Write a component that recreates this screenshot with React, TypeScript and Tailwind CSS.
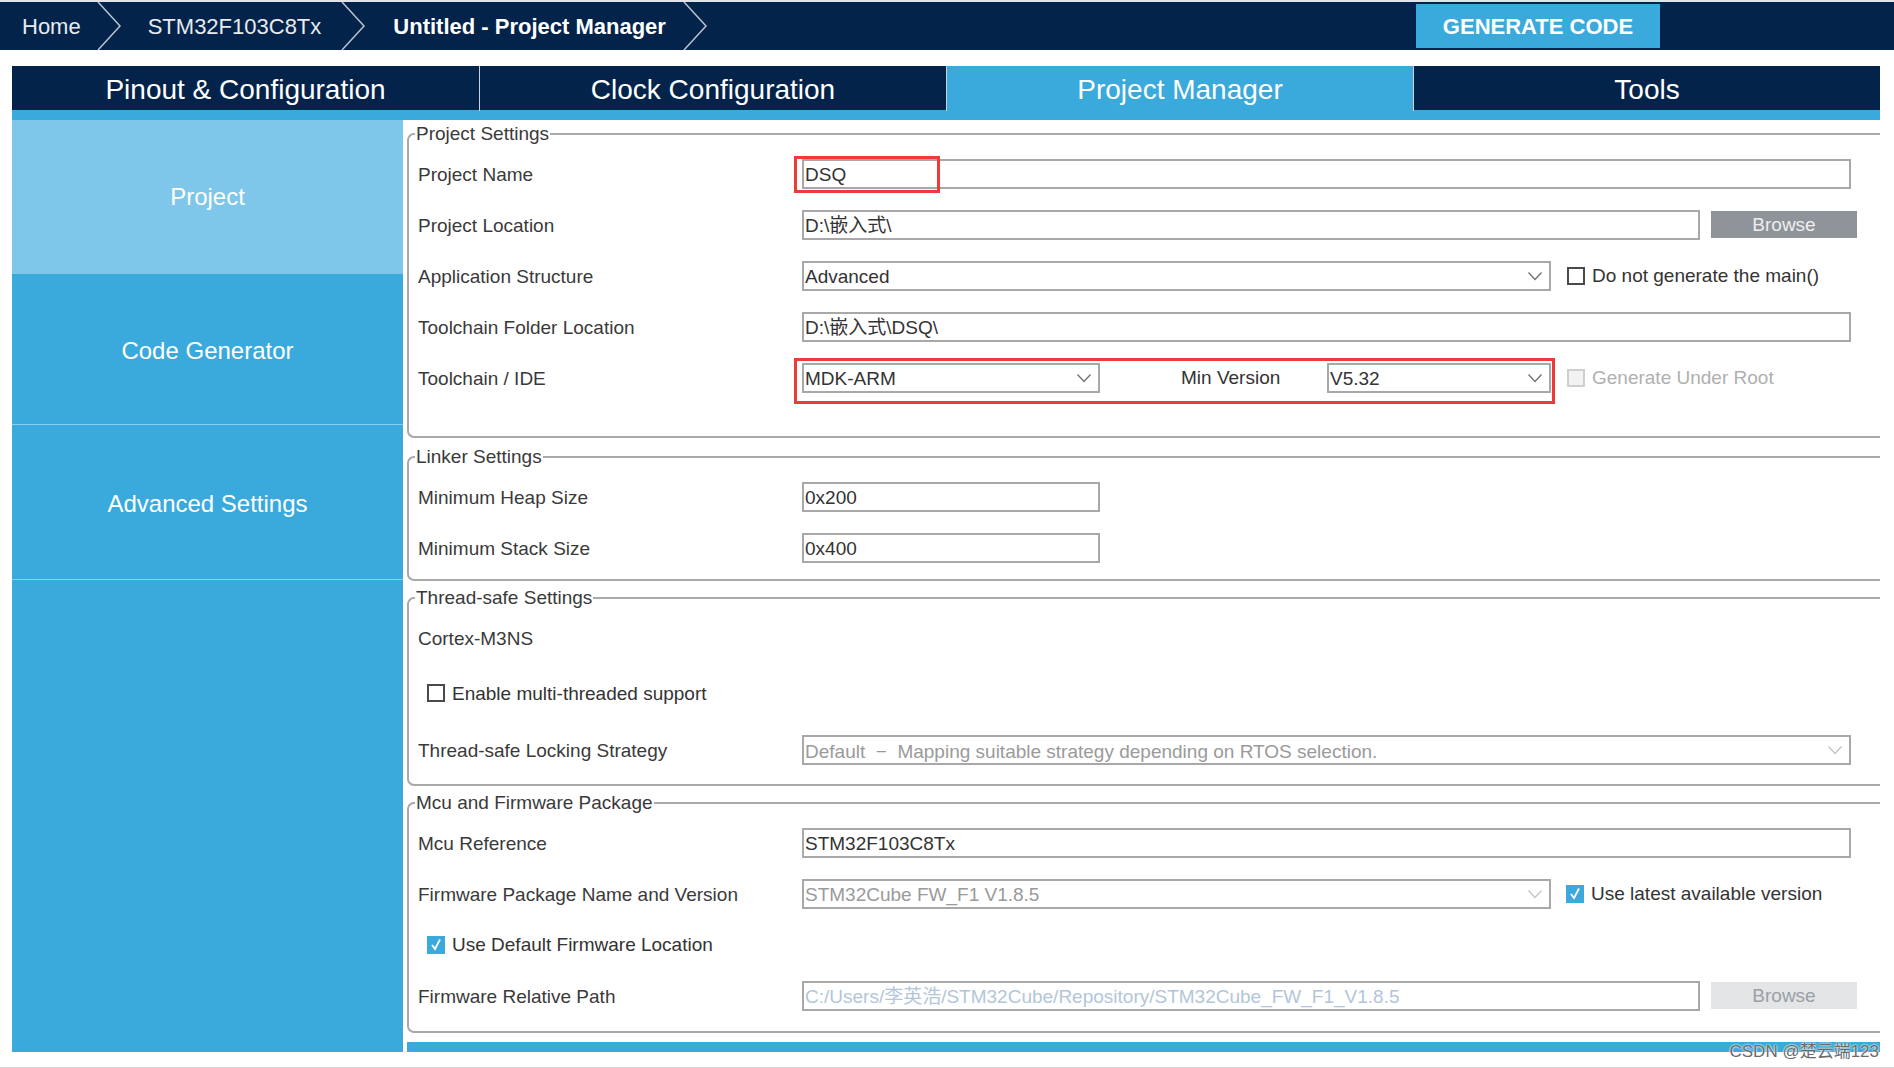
import React from "react";

const FONT = "font-['Liberation_Sans','Noto_Sans_CJK_SC',sans-serif]";

function Caret({ faint = false }: { faint?: boolean }) {
  return (
    <svg width="16" height="10" viewBox="0 0 16 10" className="shrink-0">
      <polyline
        points="1.5,1.5 8,8.5 14.5,1.5"
        fill="none"
        stroke={faint ? "#c4c4c4" : "#707070"}
        strokeWidth="1.3"
      />
    </svg>
  );
}

function Crumb() {
  return (
    <svg width="26" height="48" viewBox="0 0 26 48" className="shrink-0">
      <polyline points="2,0 24,24 2,48" fill="none" stroke="#b9c2cf" strokeWidth="1.5" />
    </svg>
  );
}

type Tone = "normal" | "muted" | "path";

function Field({
  width,
  value,
  tone = "normal",
  select = false,
  children,
}: {
  width: string;
  value: string;
  tone?: Tone;
  select?: boolean;
  children?: React.ReactNode;
}) {
  const color =
    tone === "muted" ? "text-[#9a9a9a]" : tone === "path" ? "text-[#b3c6d9]" : "text-[#333333]";
  return (
    <div
      className={`relative flex h-[30px] shrink-0 items-center justify-between border-2 border-[#a8a8a8] bg-white pl-[1px] pr-[6px] text-[19px] ${width} ${color}`}
    >
      <span className="whitespace-pre pt-[2px] leading-none">{value}</span>
      {select && <Caret faint={tone !== "normal"} />}
      {children}
    </div>
  );
}

function Check({ state }: { state: "off" | "on" | "disabled" }) {
  if (state === "on") {
    return (
      <span className="flex h-[18px] w-[18px] shrink-0 items-center justify-center bg-[#3aa9dc]">
        <svg width="12" height="13" viewBox="0 0 12 13">
          <polyline points="2,7 5,11 10,1.5" fill="none" stroke="white" strokeWidth="1.8" />
        </svg>
      </span>
    );
  }
  if (state === "disabled") {
    return <span className="h-[18px] w-[18px] shrink-0 border-2 border-[#cfcfcf] bg-[#f2f2f2]" />;
  }
  return <span className="h-[18px] w-[18px] shrink-0 border-2 border-[#4a4a4a] bg-white" />;
}

function Browse({ disabled = false }: { disabled?: boolean }) {
  return (
    <div
      className={`ml-[11px] flex h-[27px] w-[146px] shrink-0 items-center justify-center pt-[2px] text-[19px] ${
        disabled ? "bg-[#e3e5e7] text-[#9aa0a5]" : "bg-[#8e949a] text-[#eeeeee]"
      }`}
    >
      Browse
    </div>
  );
}

function Row({
  label,
  h = "h-[51px]",
  children,
}: {
  label?: string;
  h?: string;
  children?: React.ReactNode;
}) {
  return (
    <div className={`flex items-center ${h}`}>
      <div className="w-[384px] shrink-0 whitespace-nowrap pt-[3px] text-[19px] text-[#3a3a3a]">
        {label}
      </div>
      {children}
    </div>
  );
}

function Group({
  title,
  className,
  children,
}: {
  title: string;
  className: string;
  children: React.ReactNode;
}) {
  return (
    <fieldset
      className={`rounded-l-[7px] border-t-2 border-b-2 border-l-2 border-[#a9a9a9] pl-[9px] ${className}`}
    >
      <legend className="-ml-[3px] px-[1px] text-[19px] leading-[22px] text-[#3a3a3a]">{title}</legend>
      {children}
    </fieldset>
  );
}

function Option({ state, label }: { state: "off" | "on" | "disabled"; label: string }) {
  return (
    <div className="flex items-center gap-[7px]">
      <Check state={state} />
      <span
        className={`whitespace-nowrap pt-[2px] text-[19px] ${
          state === "disabled" ? "text-[#b0b0b0]" : "text-[#333333]"
        }`}
      >
        {label}
      </span>
    </div>
  );
}

const tabs = ["Pinout & Configuration", "Clock Configuration", "Project Manager", "Tools"];
const sideItems = [
  { label: "Project", cls: "h-[154px] bg-[#7ec6ea]" },
  { label: "Code Generator", cls: "h-[151px] pt-[4px] border-b border-[#8ccdee]" },
  { label: "Advanced Settings", cls: "h-[155px] pt-[4px] border-b border-[#8ccdee]" },
];

export default function App() {
  return (
    <div className={`relative h-[1068px] w-[1894px] overflow-hidden bg-white ${FONT}`}>
      {/* breadcrumb bar */}
      <div className="flex h-[50px] items-center border-t-2 border-[#dfe4ea] bg-[#03234b] pl-[22px] text-[22px]">
        <span className="text-[#e8ebef]">Home</span>
        <span className="ml-[15px] flex">
          <Crumb />
        </span>
        <span className="ml-[26px] text-[#e8ebef]">STM32F103C8Tx</span>
        <span className="ml-[19px] flex">
          <Crumb />
        </span>
        <span className="ml-[27px] font-bold text-white">Untitled - Project Manager</span>
        <span className="ml-[16px] flex">
          <Crumb />
        </span>
        <div className="ml-auto mr-[234px] flex h-[44px] w-[244px] items-center justify-center bg-[#3aa9dc] text-[22px] font-bold text-white">
          GENERATE CODE
        </div>
      </div>

      {/* main tabs */}
      <div className="ml-[12px] mr-[14px] mt-[16px]">
        <div className="grid h-[44px] grid-cols-4 bg-[#03234b]">
          {tabs.map((t, i) => (
            <div
              key={t}
              className={`flex items-center justify-center pt-[3px] text-[28px] text-white ${
                i > 0 ? "border-l border-[#c9d2dd]" : ""
              } ${t === "Project Manager" ? "bg-[#3aa9dc]" : ""}`}
            >
              {t}
            </div>
          ))}
        </div>
        <div className="h-[10px] bg-[#3aa9dc]" />

        <div className="flex h-[932px]">
          {/* sidebar */}
          <div className="flex w-[391px] shrink-0 flex-col bg-[#3aa9dc]">
            {sideItems.map((s) => (
              <div
                key={s.label}
                className={`flex items-center justify-center text-[24px] text-white ${s.cls}`}
              >
                {s.label}
              </div>
            ))}
          </div>

          {/* settings */}
          <div className="flex min-w-0 flex-1 flex-col overflow-hidden pl-[4px]">
            <Group title="Project Settings" className="mt-[3px] pb-[33px]">
              <div className="pt-[3px]">
                <Row label="Project Name">
                  <Field width="w-[1049px]" value="DSQ">
                    <div className="absolute -left-[10px] -top-[5px] h-[37px] w-[146px] border-[3px] border-[#ef3a3a]" />
                  </Field>
                </Row>
                <Row label="Project Location">
                  <Field width="w-[898px]" value="D:\嵌入式\" />
                  <Browse />
                </Row>
                <Row label="Application Structure">
                  <Field width="w-[749px]" value="Advanced" select />
                  <div className="ml-[16px]">
                    <Option state="off" label="Do not generate the main()" />
                  </div>
                </Row>
                <Row label="Toolchain Folder Location">
                  <Field width="w-[1049px]" value="D:\嵌入式\DSQ\" />
                </Row>
                <Row label="Toolchain / IDE">
                  <div className="-ml-[8px] mt-[7px] flex items-center border-[3px] border-[#ef3a3a] pb-[8px] pl-[5px] pr-[1px] pt-[1px]">
                    <Field width="w-[298px]" value="MDK-ARM" select />
                    <span className="ml-[81px] w-[146px] pt-[2px] text-[19px] text-[#333333]">Min Version</span>
                    <Field width="w-[224px]" value="V5.32" select />
                  </div>
                  <div className="ml-[12px]">
                    <Option state="disabled" label="Generate Under Root" />
                  </div>
                </Row>
              </div>
            </Group>

            <Group title="Linker Settings" className="mt-[8px] pb-[6px]">
              <div className="pt-[3px]">
                <Row label="Minimum Heap Size">
                  <Field width="w-[298px]" value="0x200" />
                </Row>
                <Row label="Minimum Stack Size">
                  <Field width="w-[298px]" value="0x400" />
                </Row>
              </div>
            </Group>

            <Group title="Thread-safe Settings" className="mt-[6px] pb-[6px]">
              <div className="pt-[3px]">
                <Row label="Cortex-M3NS" h="h-[52px]" />
                <div className="flex h-[58px] items-center pl-[9px]">
                  <Option state="off" label="Enable multi-threaded support" />
                </div>
                <Row label="Thread-safe Locking Strategy" h="h-[56px]">
                  <Field
                    width="w-[1049px]"
                    value={"Default  \u2212  Mapping suitable strategy depending on RTOS selection."}
                    tone="muted"
                    select
                  />
                </Row>
              </div>
            </Group>

            <Group title="Mcu and Firmware Package" className="mt-[6px] pb-[10px]">
              <div className="pt-[3px]">
                <Row label="Mcu Reference">
                  <Field width="w-[1049px]" value="STM32F103C8Tx" />
                </Row>
                <Row label="Firmware Package Name and Version">
                  <Field width="w-[749px]" value="STM32Cube FW_F1 V1.8.5" tone="muted" select />
                  <div className="ml-[15px]">
                    <Option state="on" label="Use latest available version" />
                  </div>
                </Row>
                <div className="flex h-[51px] items-center pl-[9px]">
                  <Option state="on" label="Use Default Firmware Location" />
                </div>
                <Row label="Firmware Relative Path">
                  <Field
                    width="w-[898px]"
                    value="C:/Users/李英浩/STM32Cube/Repository/STM32Cube_FW_F1_V1.8.5"
                    tone="path"
                  />
                  <Browse disabled />
                </Row>
              </div>
            </Group>

            <div className="mt-[9px] h-[10px] shrink-0 bg-[#3aa9dc]" />
          </div>
        </div>
      </div>

      <div className="h-[16px] border-b border-[#d9d9d9]" />

      {/* watermark */}
      <div className="absolute right-[15px] top-[1039px] text-[17px] text-[#6a6a6a] [text-shadow:0_0_2px_#ffffff,0_0_2px_#ffffff]">
        CSDN @楚云端123
      </div>
    </div>
  );
}
